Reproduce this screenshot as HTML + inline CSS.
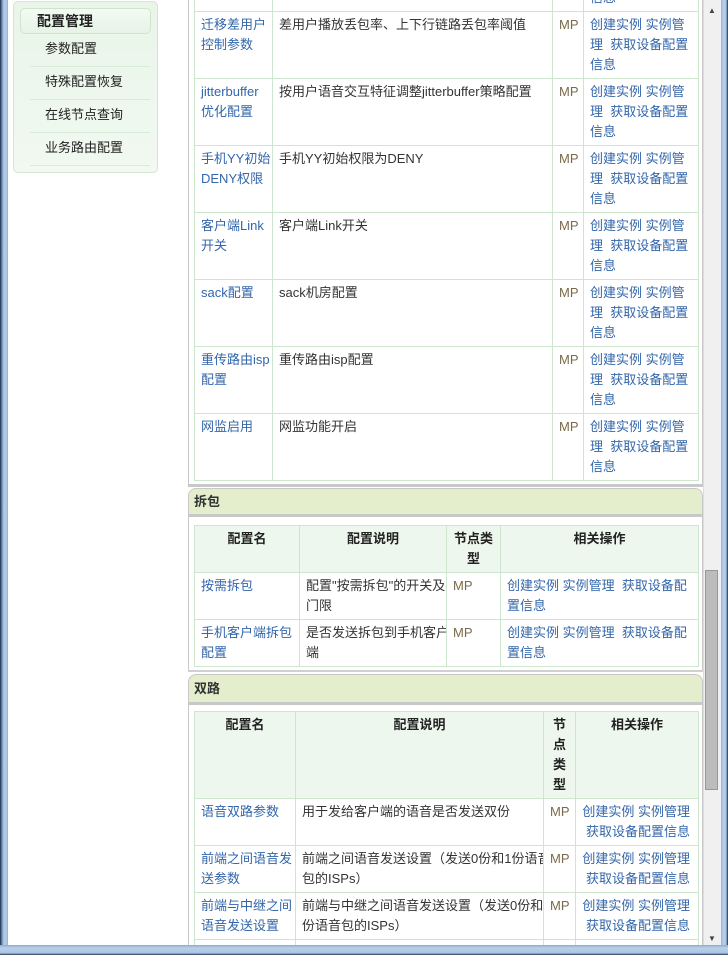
<!DOCTYPE html>
<html><head><meta charset="utf-8"><style>
*{margin:0;padding:0;box-sizing:border-box}
html,body{width:728px;height:955px;overflow:hidden}
body{background:#fff;position:relative;font-family:"Liberation Sans","Noto Sans CJK SC",sans-serif;font-size:13px;color:#333}
#wrap{position:absolute;left:0;top:0;width:728px;height:955px;overflow:hidden}
.abs{position:absolute}
a{color:#3366aa;text-decoration:none}
.side{left:13px;top:1px;width:145px;height:172px;border:1px solid #d3e6d3;border-radius:5px;background:linear-gradient(#e9f5e9,#f1f9f1)}
.sh{left:20px;top:8px;width:131px;height:26px;border:1px solid #cfe3cf;border-radius:5px;background:linear-gradient(#f3fbf3,#e6f3e6);font-weight:bold;font-size:14px;padding-left:16px;line-height:24px;color:#222}
.si{left:30px;width:120px;height:33px;border-bottom:1px solid #d8ebd8;padding-left:15px;line-height:30px;font-size:13px;color:#222}
table{position:absolute;border-collapse:collapse;table-layout:fixed}
td,th{border:1px solid #cde6cd;vertical-align:top;padding:3px 1px 3px 6px;line-height:20px;font-size:13px;word-break:normal;overflow-wrap:anywhere;overflow:hidden}
th{background:#eef7ee;font-weight:bold;text-align:center;color:#222;padding:3px 2px}
.nw{white-space:nowrap}
.mp{color:#7a6a4a}
.sec{left:188px;width:515px;border:1px solid #c8c8c8;border-bottom:3px solid #c8c8c8;border-radius:8px 8px 0 0;background:#e4eecc;font-weight:bold;padding-left:5px;color:#333}
.vl{width:1px;background:#c8c8c8}
.fr{z-index:5}
.ra{text-align:right;padding:3px 8px 3px 2px;white-space:nowrap}
</style></head><body><div id="wrap">

<div class="abs side"></div>
<div class="abs sh">配置管理</div>
<div class="abs si" style="top:34px">参数配置</div>
<div class="abs si" style="top:67px">特殊配置恢复</div>
<div class="abs si" style="top:100px">在线节点查询</div>
<div class="abs si" style="top:133px">业务路由配置</div>

<div class="abs vl" style="left:188px;top:0;height:487px"></div>
<div class="abs vl" style="left:702px;top:0;height:487px"></div>
<div class="abs" style="left:188px;top:484px;width:515px;height:3px;background:#c8c8c8"></div>

<table style="left:194px;top:-56px;width:504px">
<colgroup><col style="width:78px"><col style="width:280px"><col style="width:31px"><col style="width:115px"></colgroup>
<tr style="height:67px"><td></td><td></td><td></td><td><a>创建实例 实例管理 获取设备配置信息</a></td></tr>
<tr style="height:67px"><td><a>迁移差用户控制参数</a></td><td>差用户播放丢包率、上下行链路丢包率阈值</td><td class="mp">MP</td><td><a>创建实例</a> <a>实例管理</a> &nbsp;<a>获取设备配置信息</a></td></tr>
<tr style="height:67px"><td><a>jitterbuffer优化配置</a></td><td>按用户语音交互特征调整jitterbuffer策略配置</td><td class="mp">MP</td><td><a>创建实例</a> <a>实例管理</a> &nbsp;<a>获取设备配置信息</a></td></tr>
<tr style="height:67px"><td class="nw"><a>手机YY初始<br>DENY权限</a></td><td>手机YY初始权限为DENY</td><td class="mp">MP</td><td><a>创建实例</a> <a>实例管理</a> &nbsp;<a>获取设备配置信息</a></td></tr>
<tr style="height:67px"><td><a>客户端Link开关</a></td><td>客户端Link开关</td><td class="mp">MP</td><td><a>创建实例</a> <a>实例管理</a> &nbsp;<a>获取设备配置信息</a></td></tr>
<tr style="height:67px"><td><a>sack配置</a></td><td>sack机房配置</td><td class="mp">MP</td><td><a>创建实例</a> <a>实例管理</a> &nbsp;<a>获取设备配置信息</a></td></tr>
<tr style="height:67px"><td class="nw"><a>重传路由isp<br>配置</a></td><td>重传路由isp配置</td><td class="mp">MP</td><td><a>创建实例</a> <a>实例管理</a> &nbsp;<a>获取设备配置信息</a></td></tr>
<tr style="height:67px"><td><a>网监启用</a></td><td>网监功能开启</td><td class="mp">MP</td><td><a>创建实例</a> <a>实例管理</a> &nbsp;<a>获取设备配置信息</a></td></tr>
</table>

<div class="abs sec" style="top:488px;height:29px;line-height:26px">拆包</div>
<div class="abs vl" style="left:188px;top:515px;height:157px"></div>
<div class="abs vl" style="left:702px;top:515px;height:157px"></div>
<div class="abs" style="left:188px;top:670px;width:515px;height:2px;background:#d0d0d0"></div>
<table style="left:194px;top:525px;width:504px">
<colgroup><col style="width:105px"><col style="width:147px"><col style="width:54px"><col style="width:198px"></colgroup>
<tr style="height:47px"><th>配置名</th><th>配置说明</th><th>节点类<br>型</th><th>相关操作</th></tr>
<tr style="height:47px"><td><a>按需拆包</a></td><td class="nw">配置"按需拆包"的开关及<br>门限</td><td class="mp">MP</td><td class="nw"><a>创建实例</a> <a>实例管理</a> &nbsp;<a>获取设备配<br>置信息</a></td></tr>
<tr style="height:47px"><td class="nw"><a>手机客户端拆包<br>配置</a></td><td class="nw">是否发送拆包到手机客户<br>端</td><td class="mp">MP</td><td class="nw"><a>创建实例</a> <a>实例管理</a> &nbsp;<a>获取设备配<br>置信息</a></td></tr>
</table>

<div class="abs sec" style="top:674px;height:31px;line-height:28px">双路</div>
<div class="abs vl" style="left:188px;top:703px;height:243px"></div>
<div class="abs vl" style="left:702px;top:703px;height:243px"></div>
<table style="left:194px;top:711px;width:504px">
<colgroup><col style="width:101px"><col style="width:248px"><col style="width:32px"><col style="width:123px"></colgroup>
<tr style="height:87px"><th>配置名</th><th>配置说明</th><th>节<br>点<br>类<br>型</th><th>相关操作</th></tr>
<tr style="height:47px"><td><a>语音双路参数</a></td><td>用于发给客户端的语音是否发送双份</td><td class="mp">MP</td><td class="ra"><a>创建实例</a> <a>实例管理</a><br><a>获取设备配置信息</a></td></tr>
<tr style="height:47px"><td class="nw"><a>前端之间语音发<br>送参数</a></td><td class="nw">前端之间语音发送设置（发送0份和1份语音<br>包的ISPs）</td><td class="mp">MP</td><td class="ra"><a>创建实例</a> <a>实例管理</a><br><a>获取设备配置信息</a></td></tr>
<tr style="height:47px"><td class="nw"><a>前端与中继之间<br>语音发送设置</a></td><td class="nw">前端与中继之间语音发送设置（发送0份和1<br>份语音包的ISPs）</td><td class="mp">MP</td><td class="ra"><a>创建实例</a> <a>实例管理</a><br><a>获取设备配置信息</a></td></tr>
<tr style="height:47px"><td></td><td></td><td></td><td></td></tr>
</table>

<div class="abs fr" style="left:0;top:0;width:8px;height:955px;background:linear-gradient(90deg,#1c2a40 0,#6f8fb8 2px,#b4cdea 4px,#a9c4e4 7px,#8ea8c8 8px)"></div>
<div class="abs fr" style="left:703px;top:0;width:18px;height:946px;background:#f0f0f0;border-left:1px solid #ddd"></div>
<div class="abs fr" style="left:705px;top:570px;width:13px;height:220px;background:#bcbcbc;border:1px solid #999"></div>
<div class="abs fr" style="left:708px;top:6px;font-size:8px;color:#444">▲</div>
<div class="abs fr" style="left:708px;top:934px;font-size:8px;color:#444">▼</div>
<div class="abs fr" style="left:721px;top:0;width:7px;height:946px;background:linear-gradient(90deg,#9ab6d8,#b8d0ec 3px,#a9c4e4 5px,#1c2a40 7px)"></div>
<div class="abs fr" style="left:0;top:945px;width:728px;height:10px;background:linear-gradient(#8fa9c8,#b8d0ec 3px,#a9c4e4 8px,#2a3550 10px)"></div>
</div></body></html>
